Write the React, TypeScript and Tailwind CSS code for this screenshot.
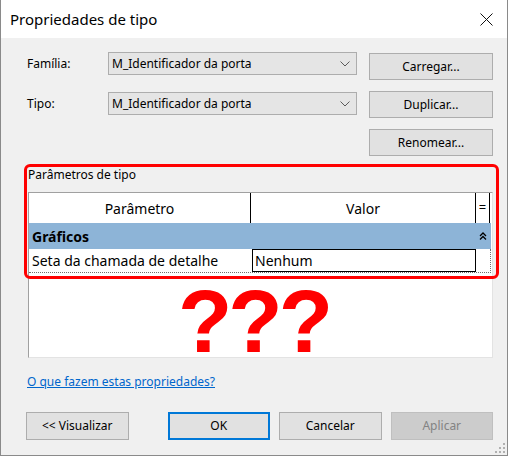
import React from 'react';

const font = { fontFamily: '"Noto Sans", "Open Sans", sans-serif' };

function Chevron() {
  return (
    <svg width="10" height="6" viewBox="0 0 10 6" className="shrink-0">
      <polyline points="0.5,0.5 5,5 9.5,0.5" fill="none" stroke="#5a5a5a" strokeWidth="1" />
    </svg>
  );
}

function Combo({ value }: { value: string }) {
  return (
    <div className="flex h-[23px] w-[249px] items-center justify-between border border-[#adadad] bg-[#e5e5e5] pl-[3px] pr-[6px] text-[12px] text-black">
      <span>{value}</span>
      <Chevron />
    </div>
  );
}

function Btn({ label, size = 'h-[27px] w-[124px]', className = '' }: { label: string; size?: string; className?: string }) {
  return (
    <button className={`flex items-center justify-center border border-[#adadad] bg-[#e1e1e1] text-[12px] text-black ${size} ${className}`}>
      {label}
    </button>
  );
}

export default function App() {
  return (
    <div
      className="relative flex h-[456px] w-[508px] flex-col overflow-hidden border-x border-b border-[#8a8a8a] bg-[#f0f0f0] text-black"
      style={font}
    >
      {/* Title bar */}
      <div className="flex h-[38px] shrink-0 items-center justify-between bg-white pl-[9px] pr-[14px]">
        <span className="text-[15px] leading-none">Propriedades de tipo</span>
        <svg width="13" height="13" viewBox="0 0 13 13">
          <line x1="0.5" y1="0.5" x2="12.5" y2="12.5" stroke="#111" strokeWidth="1" />
          <line x1="12.5" y1="0.5" x2="0.5" y2="12.5" stroke="#111" strokeWidth="1" />
        </svg>
      </div>

      {/* Body */}
      <div className="flex flex-col pl-[25px] pr-[14px]">
        <div className="mt-[14px] flex">
          <div className="flex flex-col gap-[17px]">
            <div className="flex items-center">
              <span className="w-[82px] pl-px text-[12px]">Família:</span>
              <Combo value="M_Identificador da porta" />
            </div>
            <div className="flex items-center">
              <span className="w-[82px] pl-px text-[12px]">Tipo:</span>
              <Combo value="M_Identificador da porta" />
            </div>
          </div>
          <div className="ml-auto mt-px flex flex-col gap-[11px]">
            <Btn label="Carregar..." />
            <Btn label="Duplicar..." />
            <Btn label="Renomear..." />
          </div>
        </div>

        <div className="mt-[11px] h-[16px] pl-[2px] text-[12px] leading-[16px]">Parâmetros de tipo</div>

        {/* Property grid */}
        <div className="ml-[2px] mt-[9px] flex h-[166px] w-[465px] flex-col border border-[#a0a0a0] border-r-[#e3e3e3] border-b-[#e3e3e3] bg-white">
          <div className="flex h-[30px] w-[462px] text-[14px]">
            <div className="flex w-[222px] items-center justify-center border-r border-black">Parâmetro</div>
            <div className="flex w-[225px] items-center justify-center border-r border-black">Valor</div>
            <div className="flex w-[14px] items-center justify-center border-r border-black text-[13px]">=</div>
          </div>
          <div className="flex h-[26px] w-[462px] items-center justify-between bg-[#8db4d7] pl-[3px] pr-[4px]">
            <span className="text-[14px] font-bold">Gráficos</span>
            <svg width="8" height="8" viewBox="0 0 8 8">
              <polyline points="1,4 4,1 7,4" fill="none" stroke="#000" strokeWidth="1.3" />
              <polyline points="1,7.5 4,4.5 7,7.5" fill="none" stroke="#000" strokeWidth="1.3" />
            </svg>
          </div>
          <div className="flex h-[24px] w-[462px] items-stretch border-b border-r border-dotted border-[#707070]">
            <div className="flex w-[223px] items-center pl-[3px] text-[14px]">Seta da chamada de detalhe</div>
            <div className="flex w-[224px] items-center border border-black bg-white pl-[2px] text-[14px]">Nenhum</div>
          </div>
        </div>

        <a className="mt-[16px] h-[16px] pl-px text-[12px] leading-[16px] text-[#0066cc] underline" href="#">
          O que fazem estas propriedades?
        </a>

        <div className="mt-[22px] flex">
          <Btn label="<< Visualizar" size="h-[28px] w-[103px]" />
          <button className="ml-[39px] flex h-[28px] w-[103px] items-center justify-center border-2 border-[#0078d7] bg-[#e1e1e1] text-[12px]">
            OK
          </button>
          <Btn label="Cancelar" size="h-[28px] w-[103px]" className="ml-[9px]" />
          <button className="ml-[9px] flex h-[28px] w-[103px] items-center justify-center border border-[#bfbfbf] bg-[#cccccc] text-[12px] text-[#838383]">
            Aplicar
          </button>
        </div>
      </div>

      {/* Red annotation */}
      <div className="pointer-events-none absolute left-[23px] top-[164px] h-[115px] w-[475px] rounded-[6px] border-[3px] border-[#ff0000]" />
      <div
        className="pointer-events-none absolute left-[177px] top-[288px] text-[89px] font-bold leading-[66px] tracking-[-4px] text-[#ff0000]"
        style={{ fontFamily: '"Liberation Sans", Arial, sans-serif' }}
      >
        ???
      </div>

      {/* Resize grip */}
      <div className="absolute bottom-[2px] right-[2px] grid grid-cols-3 gap-[2px]">
        <span className="h-[2px] w-[2px]" />
        <span className="h-[2px] w-[2px]" />
        <span className="h-[2px] w-[2px] bg-[#b0b0b0]" />
        <span className="h-[2px] w-[2px]" />
        <span className="h-[2px] w-[2px] bg-[#b0b0b0]" />
        <span className="h-[2px] w-[2px] bg-[#b0b0b0]" />
        <span className="h-[2px] w-[2px] bg-[#b0b0b0]" />
        <span className="h-[2px] w-[2px] bg-[#b0b0b0]" />
        <span className="h-[2px] w-[2px] bg-[#b0b0b0]" />
      </div>
    </div>
  );
}
